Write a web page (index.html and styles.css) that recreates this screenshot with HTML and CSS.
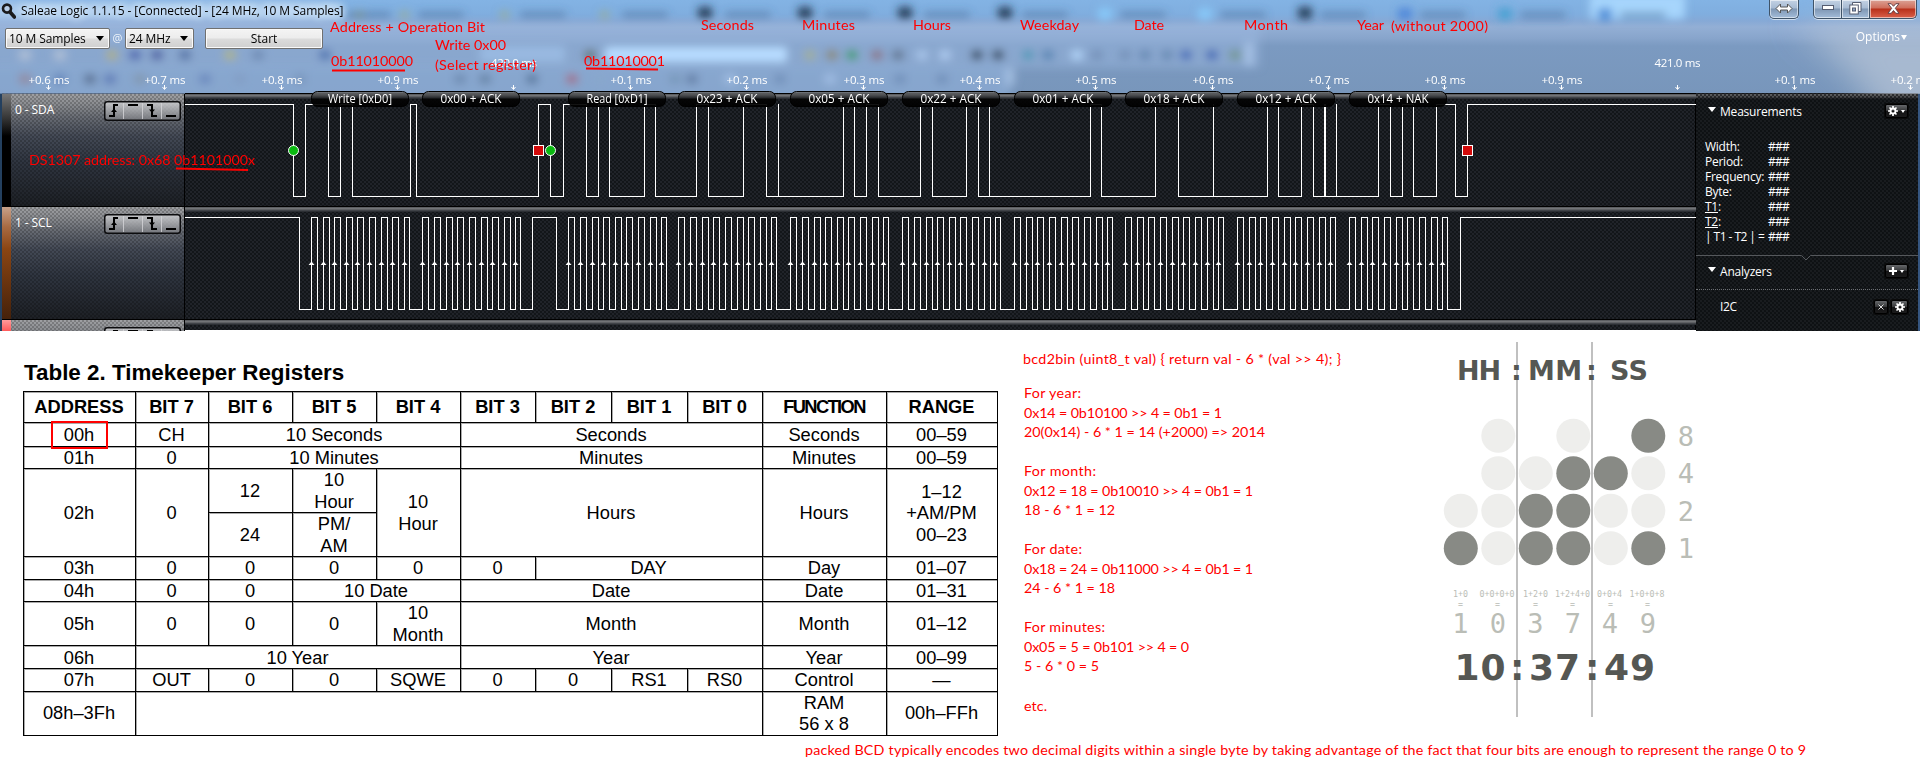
FILE: index.html
```html
<!DOCTYPE html>
<html lang="en">
<head>
<meta charset="utf-8">
<title>Saleae Logic 1.1.15</title>
<link rel="stylesheet" href="styles.css">
</head>
<body>
<section class="logic">
  <header class="top">
    <svg class="backdrop" width="1920" height="94" id="backdrop">
      <defs>
        <filter id="soft" x="-50%" y="-50%" width="200%" height="200%"><feGaussianBlur stdDeviation="4"/></filter>
        <filter id="wide" x="-50%" y="-50%" width="200%" height="200%"><feGaussianBlur stdDeviation="16"/></filter>
      </defs>
      <path d="M1790 24H1960V130H1890Q1850 60 1790 24Z" fill="#c0cbda" opacity=".65" filter="url(#wide)"/>
      <g id="smudges" filter="url(#soft)"></g>
    </svg>
    <div class="titlebar">
      <svg class="lens" width="15" height="16" viewBox="0 0 15 16"><circle cx="6" cy="5.6" r="4" fill="#b9cfe8" stroke="#1b1b1d" stroke-width="2.6"/><path d="M9 9l4.4 5" stroke="#1b1b1d" stroke-width="3.6" stroke-linecap="round"/></svg>
      <span class="title">Saleae Logic 1.1.15 - [Connected] - [24 MHz, 10 M Samples]</span>
      <div class="win-buttons">
        <span class="wb swap"><svg width="18" height="11" viewBox="0 0 18 11"><path d="M1 5.5L5.500 1V4H12.500V1L17 5.500L12.500 10V7H5.500V10Z" fill="#fff" stroke="#555" stroke-width="1"/></svg></span>
        <span class="wb min"><svg width="12" height="6" viewBox="0 0 12 6"><rect x=".5" y=".5" width="11" height="4" fill="#fff" stroke="#555c70"/></svg></span>
        <span class="wb max"><svg width="13" height="13" viewBox="0 0 13 13"><path d="M3.500 .5H12V9.500H3.500Z" fill="#fff" stroke="#555c70"/><rect x=".8" y="3" width="8.500" height="9" fill="#fff" stroke="#555c70"/><rect x="3.500" y="6" width="3" height="3" fill="#8fa4c4" stroke="#555c70"/></svg></span>
        <span class="wb close"><svg width="13" height="11" viewBox="0 0 13 11"><path d="M1 .7H4.200L6.500 3.300L8.800 .7H12L8.300 5.300L12 10.300H8.800L6.500 7.500L4.200 10.300H1L4.700 5.300Z" fill="#fff" stroke="#5c3c44" stroke-width=".9"/></svg></span>
      </div>
    </div>
    <div class="toolbar">
      <span class="select samples">10 M Samples<i class="caret"></i></span>
      <span class="at">@</span>
      <span class="select rate">24 MHz<i class="caret"></i></span>
      <span class="start">Start</span>
      <span class="options">Options<i class="caret"></i></span>
    </div>
  </header>
  <div class="capture">
    <div class="channels">
      <div class="channel ch0"><i class="tag"></i><span class="name">0 - SDA</span><svg class="trig" width="77" height="20"><use href="#edges"/></svg></div>
      <div class="channel ch1"><i class="tag"></i><span class="name">1 - SCL</span><svg class="trig" width="77" height="20"><use href="#edges"/></svg></div>
      <div class="channel ch2"><i class="tag"></i><span class="name"></span><svg class="trig" width="77" height="20"><use href="#edges"/></svg></div>
    </div>
    <aside class="side">
      <div class="head"><i class="tri"></i><span>Measurements</span>
        <span class="mini gear"><svg width="10" height="10" viewBox="0 0 10 10"><use href="#cog"/></svg><i class="drop"></i></span></div>
      <dl class="values">
        <dt>Width:</dt><dd>###</dd>
        <dt>Period:</dt><dd>###</dd>
        <dt>Frequency:</dt><dd>###</dd>
        <dt>Byte:</dt><dd>###</dd>
        <dt><u>T1</u>:</dt><dd>###</dd>
        <dt><u>T2</u>:</dt><dd>###</dd>
        <dt class="diff">| T1 - T2 | =</dt><dd>###</dd>
      </dl>
      <svg class="notch" width="222" height="8"><path d="M0 1.500H105.500L110 6L114.500 1.500H222" fill="none" stroke="#55585c"/></svg>
      <div class="head second"><i class="tri"></i><span>Analyzers</span>
        <span class="mini gear"><svg width="8" height="8" viewBox="0 0 8 8"><path d="M4 0V8M0 4H8" stroke="#fff" stroke-width="2.200"/></svg><i class="drop"></i></span></div>
      <div class="analyzer"><span>I2C</span>
        <span class="mini small"><svg width="6" height="6" viewBox="0 0 6 6"><path d="M.5 .5L5.500 5.500M5.500 .5L.5 5.500" stroke="#ddd" stroke-width="1"/></svg></span>
        <span class="mini cogbtn"><svg width="10" height="10" viewBox="0 0 10 10"><use href="#cog"/></svg></span></div>
    </aside>
  </div>
  <svg class="overlay" width="1920" height="331">
    <defs>
      <linearGradient id="pill" x1="0" y1="0" x2="0" y2="1"><stop offset="0" stop-color="#77797c"/><stop offset=".42" stop-color="#26282b"/><stop offset=".5" stop-color="#050505"/><stop offset="1" stop-color="#000"/></linearGradient>
      <linearGradient id="btn" x1="0" y1="0" x2="0" y2="1"><stop offset="0" stop-color="#d0d1d4"/><stop offset="1" stop-color="#77797e"/></linearGradient>
      <g id="edges">
        <rect x=".75" y=".75" width="75.500" height="18.500" rx="2.500" fill="url(#btn)" fill-opacity=".85" stroke="#0c0c0e" stroke-width="1.500"/>
        <path d="M19.500 2V18M38.500 2V18M57.500 2V18" stroke="#d4d4d8" stroke-opacity=".8"/>
        <path d="M5 15H10V4H14M24 4H34M43 4H48V15H53M62 15H72" fill="none" stroke="#000" stroke-width="2"/>
        <path d="M7 11L10 7.500L13 11ZM45 8.500L48 12L51 8.500Z"/>
      </g>
      <g id="cog"><circle cx="5" cy="5" r="2.500" fill="none" stroke="#fff" stroke-width="1.900"/><path d="M5 0V2M5 8V10M0 5H2M8 5H10M1.500 1.500L3 3M7 7L8.500 8.500M8.500 1.500L7 3M3 7L1.500 8.500" stroke="#fff" stroke-width="1.700"/></g>
    </defs>
    <g id="scope"></g>
    <g class="tick"><text x="491" y="67" textLength="46">420.0 ms</text><text x="1654.500" y="67" textLength="46">421.0 ms</text></g>
    <g class="note">
      <text x="330" y="32" textLength="155">Address + Operation Bit</text>
      <text x="435" y="50" textLength="71">Write 0x00</text>
      <text x="331" y="66" textLength="82">0b11010000</text>
      <text x="435" y="70" textLength="101">(Select register)</text>
      <text x="584" y="66" textLength="81">0b11010001</text>
      <text x="701" y="30" textLength="53">Seconds</text>
      <text x="802" y="30" textLength="53">Minutes</text>
      <text x="913" y="30" textLength="38">Hours</text>
      <text x="1020" y="30" textLength="59">Weekday</text>
      <text x="1134" y="30" textLength="30">Date</text>
      <text x="1244" y="30" textLength="44">Month</text>
      <text x="1357" y="30" textLength="27">Year</text>
      <text x="1391" y="31" textLength="97">(without 2000)</text>
      <text x="29" y="165" textLength="226">DS1307 address: 0x68 0b1101000x</text>
      <path d="M332 70.500H405M586 68.500L658 69.500M176 168.500L248 170" stroke="#f00" stroke-width="2"/>
    </g>
  </svg>
</section>

<main class="sheet">
  <section class="registers">
    <h2>Table 2. Timekeeper Registers</h2>
    <table>
      <colgroup><col class="c112"><col class="c73"><col class="c84"><col class="c84"><col class="c84"><col class="c75"><col class="c76"><col class="c76"><col class="c75"><col class="c124"><col class="c111"></colgroup>
      <tr class="hd"><th>ADDRESS</th><th>BIT 7</th><th>BIT 6</th><th>BIT 5</th><th>BIT 4</th><th>BIT 3</th><th>BIT 2</th><th>BIT 1</th><th>BIT 0</th><th class="tight">FUNCTION</th><th>RANGE</th></tr>
      <tr class="r23"><td><span class="mark">00h</span></td><td>CH</td><td colspan="3">10 Seconds</td><td colspan="4">Seconds</td><td>Seconds</td><td>00–59</td></tr>
      <tr class="r23"><td>01h</td><td>0</td><td colspan="3">10 Minutes</td><td colspan="4">Minutes</td><td>Minutes</td><td>00–59</td></tr>
      <tr class="r44"><td rowspan="2">02h</td><td rowspan="2">0</td><td>12</td><td>10<br>Hour</td><td rowspan="2">10<br>Hour</td><td rowspan="2" colspan="4">Hours</td><td rowspan="2">Hours</td><td rowspan="2">1–12<br>+AM/PM<br>00–23</td></tr>
      <tr class="r44"><td>24</td><td>PM/<br>AM</td></tr>
      <tr class="r23"><td>03h</td><td>0</td><td>0</td><td>0</td><td>0</td><td>0</td><td colspan="3">DAY</td><td>Day</td><td>01–07</td></tr>
      <tr class="r23"><td>04h</td><td>0</td><td>0</td><td colspan="2">10 Date</td><td colspan="4">Date</td><td>Date</td><td>01–31</td></tr>
      <tr class="r44"><td>05h</td><td>0</td><td>0</td><td>0</td><td>10<br>Month</td><td colspan="4">Month</td><td>Month</td><td>01–12</td></tr>
      <tr class="r23"><td>06h</td><td colspan="4">10 Year</td><td colspan="4">Year</td><td>Year</td><td>00–99</td></tr>
      <tr class="r23"><td>07h</td><td>OUT</td><td>0</td><td>0</td><td>SQWE</td><td>0</td><td>0</td><td>RS1</td><td>RS0</td><td>Control</td><td>—</td></tr>
      <tr class="r44"><td>08h–3Fh</td><td colspan="8"></td><td>RAM<br>56 x 8</td><td>00h–FFh</td></tr>
    </table>
  </section>
  <div class="right">
    <div class="figures">
      <svg class="note" width="420" height="400" viewBox="1000 331 420 400">
        <text x="1023" y="364" textLength="318">bcd2bin (uint8_t val) { return val - 6 * (val &gt;&gt; 4); }</text>
        <text x="1024" y="398" textLength="57">For year:</text>
        <text x="1024" y="418" textLength="198">0x14 = 0b10100 &gt;&gt; 4 = 0b1 = 1</text>
        <text x="1024" y="437" textLength="241">20(0x14) - 6 * 1 = 14 (+2000) =&gt; 2014</text>
        <text x="1024" y="476" textLength="72">For month:</text>
        <text x="1024" y="496" textLength="229">0x12 = 18 = 0b10010 &gt;&gt; 4 = 0b1 = 1</text>
        <text x="1024" y="515" textLength="91">18 - 6 * 1 = 12</text>
        <text x="1024" y="554" textLength="58">For date:</text>
        <text x="1024" y="574" textLength="229">0x18 = 24 = 0b11000 &gt;&gt; 4 = 0b1 = 1</text>
        <text x="1024" y="593" textLength="91">24 - 6 * 1 = 18</text>
        <text x="1024" y="632" textLength="81">For minutes:</text>
        <text x="1024" y="652" textLength="165">0x05 = 5 = 0b101 &gt;&gt; 4 = 0</text>
        <text x="1024" y="671" textLength="75">5 - 6 * 0 = 5</text>
        <text x="1024" y="711" textLength="23">etc.</text>
      </svg>
      <svg class="clock" width="300" height="400" viewBox="1420 331 300 400">
        <path d="M1517 342V717M1592 342V717" stroke="#c0c0c0" stroke-width="2"/>
        <g class="hms"><text x="1457" y="380" textLength="44">HH</text><text x="1511" y="380">:</text><text x="1528" y="380" textLength="54">MM</text><text x="1586" y="380">:</text><text x="1610" y="380" textLength="38">SS</text></g>
        <g id="bits"></g>
        <g class="weights"><text x="1686" y="446">8</text><text x="1686" y="483">4</text><text x="1686" y="521">2</text><text x="1686" y="558">1</text></g>
        <g class="sums"><text x="1460.500" y="597">1+0</text><text x="1497" y="597">0+0+0+0</text><text x="1535.500" y="597">1+2+0</text><text x="1572.500" y="597">1+2+4+0</text><text x="1609.500" y="597">0+0+4</text><text x="1647" y="597">1+0+0+8</text>
          <text x="1460.500" y="606.500">=</text><text x="1497.500" y="606.500">=</text><text x="1535.500" y="606.500">=</text><text x="1572.500" y="606.500">=</text><text x="1610.500" y="606.500">=</text><text x="1647.500" y="606.500">=</text></g>
        <g class="weights"><text x="1460.500" y="633">1</text><text x="1498" y="633">0</text><text x="1535.500" y="633">3</text><text x="1573" y="633">7</text><text x="1610" y="633">4</text><text x="1648" y="633">9</text></g>
        <g class="time"><text x="1454.500" y="680" textLength="51">10</text><text x="1510" y="680">:</text><text x="1529" y="680" textLength="51">37</text><text x="1585" y="680">:</text><text x="1604" y="680" textLength="51">49</text></g>
      </svg>
    </div>
  </div>
  <svg class="note footer" width="1120" height="33" viewBox="800 731 1120 33"><text x="805" y="755" textLength="1001">packed BCD typically encodes two decimal digits within a single byte by taking advantage of the fact that four bits are enough to represent the range 0 to 9</text></svg>
</main>
<script src="waveform.js"></script>
</body>
</html>
```

FILE: styles.css
```css
* { box-sizing: border-box; }
body { margin: 0; background: #fff; overflow: hidden; font-family: "Open Sans", "Noto Sans", sans-serif; }

.logic { position: relative; height: 331px; width: 1920px; overflow: hidden; font-size: 12px; }
.top { position: relative; height: 93px; background: linear-gradient(#83b3e4 0, #80aedf 14px, #86a9d6 21px, #93afd5 27px, #88a5cc 38px, #7b9ac1 46px, #7896bb 93px); }
.backdrop { position: absolute; left: 0; top: 0; }
.titlebar { position: relative; display: flex; align-items: flex-start; height: 27px; padding-top: 3px; }
.lens { margin-left: 1px; }
.title { margin-left: 3px; line-height: 16px; padding: 0 2px; color: #000; letter-spacing: -.09px; white-space: nowrap; text-shadow: 0 0 6px #dcecff, 0 0 8px #dcecff, 0 0 10px #dcecff; }
.win-buttons { margin: -3px 3px 0 auto; display: flex; }
.wb { height: 19px; display: flex; align-items: center; justify-content: center; padding-bottom: 2px; border: 1px solid #3f5368; border-top: 0; box-shadow: inset 0 0 0 1px rgba(255,255,255,.55), 0 1px 0 rgba(255,255,255,.6); background: linear-gradient(#c3d2e4 0, #a7bbd3 8px, #7f97b4 9px, #a3bcd9 100%); }
.swap { width: 30px; border-radius: 0 0 5px 5px; margin-right: 14px; }
.min { width: 29px; border-radius: 0 0 0 5px; }
.max { width: 28px; border-left: 0; }
.close { width: 47px; border-left: 0; border-radius: 0 0 5px 0; background: linear-gradient(#dba295 0, #cf6e5b 8px, #b8301a 9px, #d9604a 100%); }
.toolbar { position: relative; display: flex; align-items: flex-start; padding: 1px 13px 0 5px; }
.select, .start { height: 21px; border: 1px solid #707070; border-radius: 2px; background: linear-gradient(#f4f4f4 0, #ececec 48%, #dcdcdc 52%, #cfcfcf 100%); box-shadow: inset 0 0 0 1px #fafafa; line-height: 19px; color: #000; display: flex; align-items: center; white-space: nowrap; }
.select { padding: 0 5px 0 3px; justify-content: space-between; letter-spacing: -.1px; }
.samples { width: 105px; }
.rate { width: 69px; }
.start { width: 118px; justify-content: center; margin-left: 11px; }
.at { width: 15px; text-align: center; color: #eef4fb; font-size: 11px; line-height: 20px; }
.caret { border: 4px solid transparent; border-top: 5px solid #000; border-bottom: 0; }
.options { margin-left: auto; color: #fff; display: flex; align-items: center; line-height: 18px; gap: 1px; }
.options .caret { border-top-color: #fff; border-left-width: 3.5px; border-right-width: 3.5px; }

.capture { display: flex; height: 238px; padding: 1px 0 0; justify-content: space-between; background-color: #202329; background-image: radial-gradient(circle at 1px 1px, rgba(8,10,13,.7) .6px, transparent 1.1px), radial-gradient(circle at 3px 3px, rgba(8,10,13,.7) .6px, transparent 1.1px); background-size: 4px 4px; border-left: 2px solid #24405f; border-right: 2px solid #35557f; }
.channels { width: 183px; display: flex; flex-direction: column; border-right: 1px solid #000; }
.channel { height: 113px; flex: none; display: flex; align-items: flex-start; border-bottom: 1px solid #000; color: #fff; background: radial-gradient(circle at 1px 1px, rgba(0,0,0,.26) .6px, transparent 1.1px) 0 0 / 4px 4px, radial-gradient(circle at 3px 3px, rgba(0,0,0,.26) .6px, transparent 1.1px) 0 0 / 4px 4px, linear-gradient(#9fa0a3 0, #8b8d91 10px, #676b73 24px, #444a56 42px, #2f3540 68px, #1d2025 112px); }
.ch2 { height: 11px; border: 0; }
.tag { width: 9px; align-self: stretch; }
.ch0 .tag { background: linear-gradient(#777 0, #333 25px, #000 42px); }
.ch1 .tag { background: linear-gradient(#c7a18a 0, #a86a42 20px, #8b4513 42px, #45210a 112px); }
.ch2 .tag { background: linear-gradient(#ff9c9c, #ff5a5a); }
.name { margin: 8px auto 0 4px; line-height: 16px; letter-spacing: -.1px; }
.trig { margin: 7px 3px 0 0; }
.side { width: 223px; border-left: 1px solid #000; color: #fff; padding-top: 8px; background: radial-gradient(circle at 1px 1px, rgba(6,8,10,.7) .6px, transparent 1.1px) 0 0 / 4px 4px, radial-gradient(circle at 3px 3px, rgba(6,8,10,.7) .6px, transparent 1.1px) 0 0 / 4px 4px, linear-gradient(#606163 0, #4a4b4d 3px, #191c1f 5px, #191c1f 100%); }
.head { display: flex; align-items: center; height: 18px; padding: 0 10px 0 12px; }
.head span:nth-child(2) { margin-left: 4px; letter-spacing: -.2px; }
.tri { border: 4.5px solid transparent; border-top: 5px solid #fff; border-bottom: 0; margin-top: -3px; }
.mini { display: flex; align-items: center; justify-content: center; height: 14px; border-radius: 2px; border: 1px solid #000; background: linear-gradient(#66686b, #343537 50%, #141415 51%, #1a1a1b); box-shadow: 0 0 0 1px #0a0a0a; }
.gear { width: 23px; margin-left: auto; gap: 3px; }
.drop { border: 2.5px solid transparent; border-top: 3px solid #fff; border-bottom: 0; }
.values { margin: 19px 0 0 9px; display: grid; grid-template-columns: 63px auto; grid-auto-rows: 15px; line-height: 15px; letter-spacing: -.25px; white-space: nowrap; }
.values dt, .values dd { margin: 0; }
.values dd { letter-spacing: -.7px; }
.values .diff { letter-spacing: -.55px; }
.notch { display: block; margin-top: 10px; }
.second { margin-top: 0; }
.analyzer { display: flex; align-items: center; margin-top: 9px; padding: 0 10px 0 24px; height: 34px; border-top: 1px dotted #6c6f73; letter-spacing: -.4px; }
.small { width: 14px; margin-left: auto; margin-right: 3px; }
.cogbtn { width: 17px; }
.overlay { position: absolute; left: 0; top: 0; pointer-events: none; }

.tick { fill: #fff; font: 11.5px "Open Sans", sans-serif; }
.bubble { fill: #fff; font: 12px "Open Sans", sans-serif; }
.note { fill: #f00; font-family: Lato, "Open Sans", sans-serif; font-size: 14.3px; }
.note text, .tick text { white-space: pre; }

.sheet { display: grid; grid-template-columns: 1000px 920px; grid-template-rows: 400px 33px; height: 433px; }
.registers { grid-row: 1 / 3; padding: 29px 0 0 23px; font-family: "Liberation Sans", Arial, sans-serif; color: #000; }
.registers h2 { margin: 0 0 5px 1px; font-size: 22.4px; line-height: 26px; }
table { border-collapse: collapse; table-layout: fixed; width: 974px; font-size: 18.3px; line-height: 21.5px; }
th, td { border: 1px solid #000; padding: 0 1px 0 0; text-align: center; vertical-align: middle; box-shadow: inset 1px 1px 0 #aaa; }
.tight { letter-spacing: -1.6px; }
.c112 { width: 112px; } .c73 { width: 73px; } .c84 { width: 84px; } .c75 { width: 75px; } .c76 { width: 76px; } .c124 { width: 124px; } .c111 { width: 111px; }
.hd { height: 31px; } .r23 { height: 22.6px; } .r44 { height: 44px; }
.mark { display: inline-block; margin: -4px 0 -3px; width: 57px; height: 28px; line-height: 24px; border: 2px solid #f00; vertical-align: middle; }
.figures { display: flex; }
.footer { margin-left: -200px; }

.hms { font: bold 27px "DejaVu Sans", sans-serif; fill: #555753; }
.time { font: bold 36px "DejaVu Sans", sans-serif; fill: #555753; }
.weights { font: 27px "DejaVu Sans Mono", monospace; fill: #babdb6; text-anchor: middle; }
.sums { font: 8.3px "DejaVu Sans Mono", monospace; fill: #babdb6; text-anchor: middle; }
.on { fill: #888a85; } .off { fill: #eeeeec; }
```

FILE: waveform.js
```js
const scope = document.getElementById('scope');
let out = '';

// Divider highlights along the top of every channel lane
[93, 206, 319].forEach(y => {
  ['#000', '#5c5e62', '#727477', '#5e6064', '#404348', '#2c2f34'].forEach((c, i) => {
    out += `<rect x="185" y="${y + i}" width="1511" height="1" fill="${c}"/>`;
  });
});
out += '<path d="M185 330.500H1696" stroke="#fff"/>';

// SDA: level toggles at each x
const sda = [293, 305, 328, 340, 352, 410, 416, 538, 550, 563, 586, 598, 609, 644, 655, 696, 708, 743, 766,
  843, 854, 866, 878, 920, 932, 966, 978, 1090, 1101, 1155, 1178, 1267, 1278, 1301, 1313, 1378, 1390, 1402, 1413, 1436, 1455, 1467];
const trace = (edges, hi, lo) => {
  let d = `M185 ${hi}`, high = true;
  edges.forEach(x => { high = !high; d += `H${x + .5}V${high ? hi : lo}`; });
  return d + 'H1696';
};
const line = d => `<path d="${d}" fill="none" stroke="#fff" shape-rendering="crispEdges"/>`;
out += line(trace(sda, 104.5, 196.5) + 'M778.500 104V196M989.500 104V196M1213.500 104V196M1325.500 104V196M1324.500 104V196M1336.500 104V196');

// SCL: nine clocks per byte
const bytes = [311, 422.4, 568.3, 678.4, 790.3, 902.3, 1014.2, 1125.2, 1237.2, 1349.2];
const scl = [299];
let arrows = '';
bytes.forEach((b, i) => {
  if (i === 2) scl.push(532, 556);
  for (let k = 0; k < 9; k++) {
    const x = Math.round(b + k * 11.62);
    scl.push(x, x + (k === 8 ? 5 : 6));
    arrows += `M${x - 2.5} 265H${x + 3.5}L${x + .5} 261.500Z`;
  }
});
scl.push(1460);
out += line(trace(scl, 217.5, 309.5)) + `<path d="${arrows}" fill="#fff"/>`;

// Start and stop conditions
[293, 550].forEach(x => out += `<circle cx="${x + .5}" cy="150.500" r="5" fill="#0ab910" stroke="#fff"/>`);
[538, 1467].forEach(x => out += `<rect x="${x - 4.500}" y="145.500" width="10" height="10" fill="#d20a0a" stroke="#fff"/>`);

// Decoded bytes
['Write [0xD0]', '0x00 + ACK', 'Read [0xD1]', '0x23 + ACK', '0x05 + ACK', '0x22 + ACK', '0x01 + ACK', '0x18 + ACK', '0x12 + ACK', '0x14 + NAK'].forEach((t, i) => {
  const x = Math.round(bytes[i]);
  const w = i === 0 ? 64 : 61;
  out += `<rect x="${x + .5}" y="91.500" width="97" height="15" rx="6" fill="url(#pill)" fill-opacity=".93" stroke="#000"/>`;
  out += `<text class="bubble" x="${x + 49 - w / 2}" y="103" textLength="${w}" lengthAdjust="spacingAndGlyphs">${t}</text>`;
});

// Timeline ticks
for (let i = 0; i < 17; i++) {
  const x = Math.round(48 + i * 116.37) + .5;
  const n = (i + 6) % 10;
  out += `<path d="M${x} 85V89M${x - 2} 87L${x} 89.500L${x + 2} 87" fill="none" stroke="#fff"/>`;
  if (n) out += `<g class="tick"><text x="${x - 20}" y="84" textLength="41">+0.${n} ms</text></g>`;
}
scope.innerHTML = out;

// Blurred content showing through the glass header: x, y, width, height, colour, opacity
const blobs = [
  [-10, 24, 1270, 44, '#9bb9e0', .45], [-10, 66, 1020, 40, '#94b3dc', .55],
  [-10, 2, 350, 18, '#c8dcf4', .6],
  [605, 47, 182, 15, '#b7dcff', 1], [1590, -6, 95, 25, '#abd9ff', .9], [480, 46, 85, 16, '#a3c6ee', .6],
  [1245, 42, 8, 24, '#b4cff0', .7], [1005, 68, 10, 18, '#b4cff0', .6]
];
[360, 405, 505, 605].forEach(x => blobs.push([x - 5, 11, 9, 8, '#9cae90', .8]));
[345, 418, 520, 622, 725, 824, 924, 1022, 1120, 1220, 1320, 1420, 1520, 1620].forEach(x => blobs.push([x, 12, 46, 6, '#3f638d', .5]));
[705, 805, 905, 1005, 1305].forEach(x => blobs.push([x - 7, 7, 14, 12, '#20354d', .9]));
[[1105, '#8bd0ff'], [1205, '#8bd0ff'], [1405, '#437ed8'], [1505, '#3f9fd0'], [1605, '#3f7fd0']].forEach(b => blobs.push([b[0] - 7, 8, 14, 12, b[1], .8]));
[[25, '#b9c6d8'], [60, '#b9c6d8'], [112, '#b4b27a'], [135, '#3e58a8'], [157, '#3e4f98'], [185, '#4a689b'], [230, '#b4b67c'], [258, '#6884ae'], [325, '#4169aa'], [590, '#5c6a60'], [810, '#a5b090'], [832, '#8b8465'], [852, '#2f9b62'], [877, '#8b6a78'], [898, '#5a6c84'], [922, '#aecbef'], [945, '#b4d1f4'], [977, '#25394f'], [998, '#25394f'], [1028, '#4797b4'], [1048, '#4f7fae'], [1077, '#b9dcff'], [1097, '#6f8db4'], [1125, '#6f8db4'], [1145, '#5f83ae'], [1167, '#5f83ae'], [1186, '#3b63b4'], [1212, '#345cb0'], [1235, '#6f9484']]
  .forEach(b => blobs.push([b[0] - 6, 50, 12, 10, b[1], .8]));
[[25, '#9b7880'], [60, '#4b6fae'], [90, '#3d5070'], [110, '#4660a8'], [140, '#80909c'], [205, '#5a76b4'], [240, '#809ac0'], [300, '#6f8ab0'], [460, '#607ca0'], [485, '#54708f'], [532, '#405c80'], [572, '#b05060'], [600, '#8ba8cc'], [675, '#6f8fae'], [692, '#50688f'], [730, '#afcbee'], [780, '#6583ad'], [830, '#adc9ee'], [900, '#6583ad'], [942, '#6583ad']]
  .forEach(b => blobs.push([b[0] - 6, 74, 12, 10, b[1], .6]));
document.getElementById('smudges').innerHTML = blobs.map(b => `<rect x="${b[0]}" y="${b[1]}" width="${b[2]}" height="${b[3]}" rx="3" fill="${b[4]}" opacity="${b[5]}"/>`).join('');

// BCD clock columns, most significant bit first
const columns = [[0, 1], [0, 0, 0, 0], [0, 1, 1], [0, 1, 1, 1], [1, 0, 0], [1, 0, 0, 1]];
document.getElementById('bits').innerHTML = columns.map((bits, c) => bits.map((b, r) =>
  `<circle class="${b ? 'on' : 'off'}" cx="${1460.8 + c * 37.5}" cy="${548.2 - (bits.length - 1 - r) * 37.5}" r="17"/>`).join('')).join('');
```
